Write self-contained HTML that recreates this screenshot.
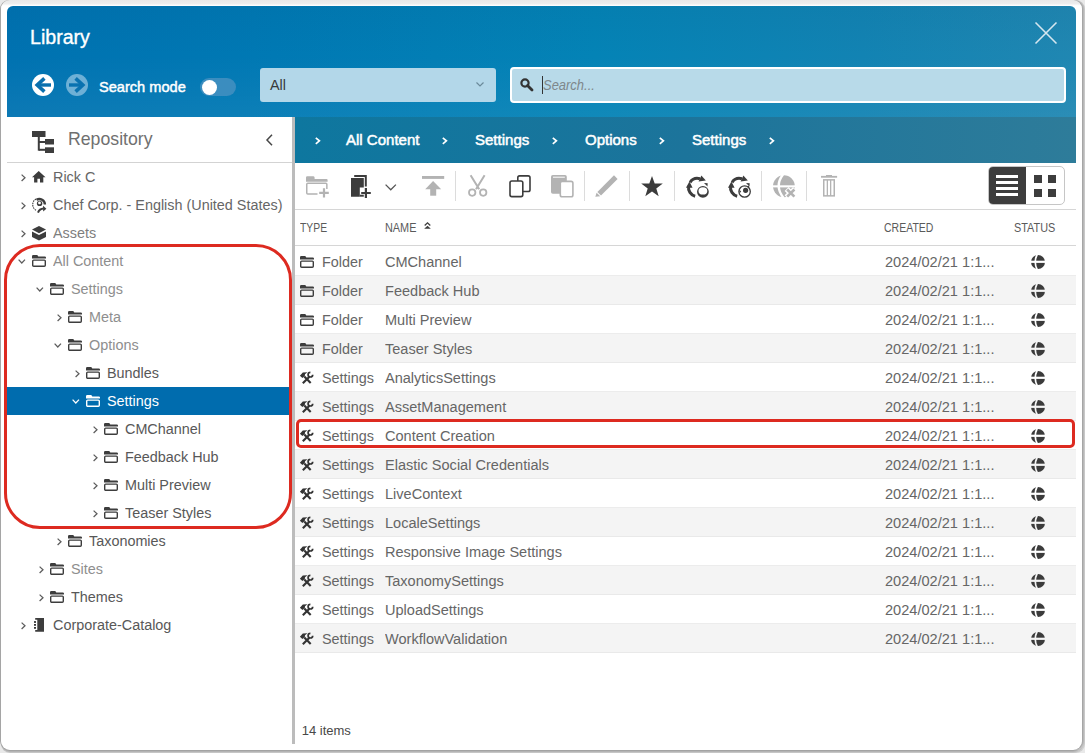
<!DOCTYPE html>
<html><head><meta charset="utf-8">
<style>
*{box-sizing:border-box;margin:0;padding:0}
html,body{width:1085px;height:753px;overflow:hidden}
body{position:relative;background:#e9e9e9;font-family:"Liberation Sans",sans-serif;color:#555}
.a{position:absolute}
.t{position:absolute;white-space:nowrap;line-height:20px}
svg{position:absolute;overflow:visible}
#frame{left:1px;top:0;width:1081px;height:750px;border-radius:9px;background:linear-gradient(#e8e8e8 0,#eeeeee 4px,#fbfbfb 5px,#ffffff 6px);box-shadow:-1px 0 0 #a5a5a5,1px 0 0 #a6a6a6,2px 0 0 #b8b8b8,3px 0 0 #c8c8c8,0 1px 0 #a3a3a3,0 2px 0 #b4b4b4,0 3px 0 #c6c6c6,2px 2px 0 #c0c0c0,3px 3px 0 #d0d0d0}
#hdr{left:7px;top:6px;width:1069px;height:111px;border-radius:6px 6px 0 0;background:linear-gradient(180deg,rgba(0,20,40,0.04) 0%,rgba(0,20,40,0) 45%,rgba(255,255,255,0.05) 100%),linear-gradient(90deg,#0072b1 0%,#0079b4 25%,#0483b6 55%,#1283b3 80%,#2087b2 100%)}
#bc{left:295px;top:117px;width:781px;height:46px;background:linear-gradient(90deg,#0e779f 0%,#1c749b 50%,#2e7c9a 100%)}
#split{left:292px;top:117px;width:3px;height:627px;background:#bcbcbc}
.tree .t{font-size:14.4px;color:#5a5a5a}
.lt{color:#8d8d8d!important}
.dk{color:#505050!important}
.hd{font-size:12.5px;color:#5a5a5a;transform-origin:0 0}
.row{position:absolute;left:295px;width:781px;height:29px;border-bottom:1px solid #e8e8e8}
.row.g{background:#f4f4f4;border-bottom-color:#e9e9e9}
.row .t{font-size:14.4px;color:#5e5e5e;top:5px}
.bct{font-size:13.7px;font-weight:bold;color:#fff}
</style></head>
<body>
<div id="frame" class="a"></div>
<div id="hdr" class="a"></div>

<!-- title -->
<div class="t" style="left:30px;top:25px;font-size:19.6px;color:#fff;line-height:24px;font-weight:normal;-webkit-text-stroke:0.35px #fff">Library</div>

<!-- close X -->
<svg style="left:1035px;top:22px" width="22" height="22"><path d="M0.5 0.5L21.5 21.5M21.5 0.5L0.5 21.5" stroke="#d5e6ef" stroke-width="1.6"/></svg>

<!-- back / forward -->
<svg style="left:32px;top:74px" width="22" height="22"><circle cx="11" cy="11" r="11" fill="#fff"/><path d="M12.4 4.4L5.2 11L12.4 17.6" fill="none" stroke="#0a70ae" stroke-width="3.6"/><path d="M5.5 11H19" stroke="#0a70ae" stroke-width="3.4"/></svg>
<svg style="left:66px;top:74px" width="22" height="22"><circle cx="11" cy="11" r="11" fill="#6eb0d6"/><path d="M9.6 4.4L16.8 11L9.6 17.6" fill="none" stroke="#0a72b0" stroke-width="3.6"/><path d="M3 11H16.5" stroke="#0a72b0" stroke-width="3.4"/></svg>

<div class="t" style="left:99px;top:76.5px;font-size:14.6px;font-weight:normal;color:#fff;-webkit-text-stroke:0.45px #fff">Search mode</div>

<!-- toggle -->
<div class="a" style="left:200px;top:78px;width:36px;height:18px;border-radius:9px;background:#3b8dbf"></div>
<div class="a" style="left:201.5px;top:79.5px;width:15px;height:15px;border-radius:50%;background:#fff"></div>

<!-- combo -->
<div class="a" style="left:260px;top:68px;width:236px;height:34px;border-radius:3px;background:#b3d7e9"></div>
<div class="t" style="left:270px;top:75px;font-size:14.4px;color:#3a3a3a">All</div>
<svg style="left:476px;top:82px" width="8" height="5"><path d="M0.5 0.5L4 4L7.5 0.5" fill="none" stroke="#6a8a9a" stroke-width="1.2"/></svg>

<!-- search -->
<div class="a" style="left:510px;top:67px;width:556px;height:36px;border-radius:4px;background:#b8dae9;border:2px solid #fff"></div>
<svg style="left:520px;top:78px" width="13" height="13"><circle cx="5" cy="5" r="3.6" fill="none" stroke="#333" stroke-width="2.2"/><path d="M7.5 7.5L12 12" stroke="#333" stroke-width="2.8" stroke-linecap="round"/></svg>
<div class="a" style="left:542px;top:76px;width:1px;height:18px;background:#333"></div>
<div class="t" style="left:543px;top:75px;font-size:14.4px;color:#7e878b;font-style:italic;transform:scaleX(0.9);transform-origin:0 0">Search...</div>

<!-- left panel header -->
<div class="a" style="left:7px;top:117px;width:285px;height:627px;background:#fff"></div>
<svg style="left:32px;top:131px" width="22" height="22"><rect x="0" y="0" width="13.5" height="6" fill="#3d3d3d"/><rect x="5.8" y="5" width="2" height="14.7" fill="#3d3d3d"/><rect x="13" y="8" width="9" height="5.5" fill="#3d3d3d"/><rect x="13" y="16.3" width="9" height="5.7" fill="#3d3d3d"/><rect x="7" y="10" width="6.5" height="2" fill="#3d3d3d"/><rect x="7" y="17.8" width="6.5" height="2" fill="#3d3d3d"/></svg>
<div class="t" style="left:68px;top:126.5px;font-size:17.8px;color:#707070;line-height:24px;transform:scaleX(0.995);transform-origin:0 0">Repository</div>
<svg style="left:266px;top:134px" width="7" height="12"><path d="M6 0.7L1 6L6 11.3" fill="none" stroke="#474747" stroke-width="1.5"/></svg>
<div class="a" style="left:7px;top:162px;width:285px;height:1px;background:#d3d3d3"></div>

<div id="split" class="a"></div>
<div id="bc" class="a"></div>



<svg style="left:20.5px;top:173.5px" width="5" height="8"><path d="M0.6 0.6L4 3.8L0.6 7" fill="none" stroke="#5c5c5c" stroke-width="1.25"/></svg>
<svg style="left:32px;top:171.4px" width="14" height="12"><path d="M6.7 0L13.5 6.3H11.3V11.6H8V7.8H5.4V11.6H2.1V6.3H0Z" fill="#3d3d3d"/></svg>
<div class="t" style="left:52.6px;top:166.73px;font-size:15.2px;color:#666666;transform:scaleX(0.947);transform-origin:0 0">Rick C</div>
<svg style="left:20.5px;top:201.5px" width="5" height="8"><path d="M0.6 0.6L4 3.8L0.6 7" fill="none" stroke="#5c5c5c" stroke-width="1.25"/></svg>
<svg style="left:30px;top:195px" width="18" height="19"><path d="M6 15.3A6.6 6.6 0 0 1 6 3.9" fill="none" stroke="#3d3d3d" stroke-width="1.1" stroke-dasharray="1.6 0.8"/><path d="M6.5 4.75A5.6 5.6 0 0 1 14.9 9.6" fill="none" stroke="#3d3d3d" stroke-width="2.4"/><circle cx="9.6" cy="8.4" r="2.7" fill="#3d3d3d"/><circle cx="9.5" cy="7.9" r="1.4" fill="#fff"/><path d="M8 17.6Q9.4 13.6 13.6 13.4" fill="none" stroke="#3d3d3d" stroke-width="2"/><path d="M13 10.8L16.4 13.8L13.2 16.6Z" fill="#3d3d3d"/></svg>
<div class="t" style="left:52.6px;top:194.73px;font-size:15.2px;color:#666666;transform:scaleX(0.947);transform-origin:0 0">Chef Corp. - English (United States)</div>
<svg style="left:20.5px;top:229.5px" width="5" height="8"><path d="M0.6 0.6L4 3.8L0.6 7" fill="none" stroke="#5c5c5c" stroke-width="1.25"/></svg>
<svg style="left:32px;top:225.5px" width="14" height="15"><path d="M7 0L14 3.6L7 7.2L0 3.6Z" fill="#3d3d3d"/><path d="M0 5.4L7 9L14 5.4V11L7 14.6L0 11Z" fill="#3d3d3d"/></svg>
<div class="t" style="left:52.6px;top:222.73px;font-size:15.2px;color:#7e7e7e;transform:scaleX(0.947);transform-origin:0 0">Assets</div>
<svg style="left:18.3px;top:259px" width="8" height="5"><path d="M0.6 0.6L3.8 4L7 0.6" fill="none" stroke="#5c5c5c" stroke-width="1.25"/></svg>
<svg style="left:32px;top:255.3px" width="14" height="12"><path d="M0 1.2Q0 0 1.2 0H5.3L6.3 1.4H12.8Q14 1.4 14 2.6V3.6H0Z" fill="#3d3d3d"/><rect x="0.7" y="5.1" width="12.6" height="6.2" rx="1" fill="none" stroke="#3d3d3d" stroke-width="1.4"/></svg>
<div class="t" style="left:52.6px;top:250.73px;font-size:15.2px;color:#8e8e8e;transform:scaleX(0.947);transform-origin:0 0">All Content</div>
<svg style="left:36.3px;top:287px" width="8" height="5"><path d="M0.6 0.6L3.8 4L7 0.6" fill="none" stroke="#5c5c5c" stroke-width="1.25"/></svg>
<svg style="left:50px;top:283.3px" width="14" height="12"><path d="M0 1.2Q0 0 1.2 0H5.3L6.3 1.4H12.8Q14 1.4 14 2.6V3.6H0Z" fill="#3d3d3d"/><rect x="0.7" y="5.1" width="12.6" height="6.2" rx="1" fill="none" stroke="#3d3d3d" stroke-width="1.4"/></svg>
<div class="t" style="left:70.6px;top:278.73px;font-size:15.2px;color:#8e8e8e;transform:scaleX(0.947);transform-origin:0 0">Settings</div>
<svg style="left:56.5px;top:313.5px" width="5" height="8"><path d="M0.6 0.6L4 3.8L0.6 7" fill="none" stroke="#5c5c5c" stroke-width="1.25"/></svg>
<svg style="left:68px;top:311.3px" width="14" height="12"><path d="M0 1.2Q0 0 1.2 0H5.3L6.3 1.4H12.8Q14 1.4 14 2.6V3.6H0Z" fill="#3d3d3d"/><rect x="0.7" y="5.1" width="12.6" height="6.2" rx="1" fill="none" stroke="#3d3d3d" stroke-width="1.4"/></svg>
<div class="t" style="left:88.6px;top:306.73px;font-size:15.2px;color:#8e8e8e;transform:scaleX(0.947);transform-origin:0 0">Meta</div>
<svg style="left:54.3px;top:343px" width="8" height="5"><path d="M0.6 0.6L3.8 4L7 0.6" fill="none" stroke="#5c5c5c" stroke-width="1.25"/></svg>
<svg style="left:68px;top:339.3px" width="14" height="12"><path d="M0 1.2Q0 0 1.2 0H5.3L6.3 1.4H12.8Q14 1.4 14 2.6V3.6H0Z" fill="#3d3d3d"/><rect x="0.7" y="5.1" width="12.6" height="6.2" rx="1" fill="none" stroke="#3d3d3d" stroke-width="1.4"/></svg>
<div class="t" style="left:88.6px;top:334.73px;font-size:15.2px;color:#8e8e8e;transform:scaleX(0.947);transform-origin:0 0">Options</div>
<svg style="left:74.5px;top:369.5px" width="5" height="8"><path d="M0.6 0.6L4 3.8L0.6 7" fill="none" stroke="#5c5c5c" stroke-width="1.25"/></svg>
<svg style="left:86px;top:367.3px" width="14" height="12"><path d="M0 1.2Q0 0 1.2 0H5.3L6.3 1.4H12.8Q14 1.4 14 2.6V3.6H0Z" fill="#3d3d3d"/><rect x="0.7" y="5.1" width="12.6" height="6.2" rx="1" fill="none" stroke="#3d3d3d" stroke-width="1.4"/></svg>
<div class="t" style="left:106.6px;top:362.73px;font-size:15.2px;color:#585858;transform:scaleX(0.947);transform-origin:0 0">Bundles</div>
<div class="a" style="left:7px;top:387px;width:282px;height:28px;background:#006cae"></div>
<svg style="left:72.3px;top:399px" width="8" height="5"><path d="M0.6 0.6L3.8 4L7 0.6" fill="none" stroke="#ffffff" stroke-width="1.25"/></svg>
<svg style="left:86px;top:395.3px" width="14" height="12"><path d="M0 1.2Q0 0 1.2 0H5.3L6.3 1.4H12.8Q14 1.4 14 2.6V3.6H0Z" fill="#ffffff"/><rect x="0.7" y="5.1" width="12.6" height="6.2" rx="1" fill="none" stroke="#ffffff" stroke-width="1.4"/></svg>
<div class="t" style="left:106.6px;top:390.73px;font-size:15.2px;color:#ffffff;transform:scaleX(0.947);transform-origin:0 0">Settings</div>
<svg style="left:92.5px;top:425.5px" width="5" height="8"><path d="M0.6 0.6L4 3.8L0.6 7" fill="none" stroke="#5c5c5c" stroke-width="1.25"/></svg>
<svg style="left:104px;top:423.3px" width="14" height="12"><path d="M0 1.2Q0 0 1.2 0H5.3L6.3 1.4H12.8Q14 1.4 14 2.6V3.6H0Z" fill="#3d3d3d"/><rect x="0.7" y="5.1" width="12.6" height="6.2" rx="1" fill="none" stroke="#3d3d3d" stroke-width="1.4"/></svg>
<div class="t" style="left:124.6px;top:418.73px;font-size:15.2px;color:#585858;transform:scaleX(0.947);transform-origin:0 0">CMChannel</div>
<svg style="left:92.5px;top:453.5px" width="5" height="8"><path d="M0.6 0.6L4 3.8L0.6 7" fill="none" stroke="#5c5c5c" stroke-width="1.25"/></svg>
<svg style="left:104px;top:451.3px" width="14" height="12"><path d="M0 1.2Q0 0 1.2 0H5.3L6.3 1.4H12.8Q14 1.4 14 2.6V3.6H0Z" fill="#3d3d3d"/><rect x="0.7" y="5.1" width="12.6" height="6.2" rx="1" fill="none" stroke="#3d3d3d" stroke-width="1.4"/></svg>
<div class="t" style="left:124.6px;top:446.73px;font-size:15.2px;color:#585858;transform:scaleX(0.947);transform-origin:0 0">Feedback Hub</div>
<svg style="left:92.5px;top:481.5px" width="5" height="8"><path d="M0.6 0.6L4 3.8L0.6 7" fill="none" stroke="#5c5c5c" stroke-width="1.25"/></svg>
<svg style="left:104px;top:479.3px" width="14" height="12"><path d="M0 1.2Q0 0 1.2 0H5.3L6.3 1.4H12.8Q14 1.4 14 2.6V3.6H0Z" fill="#3d3d3d"/><rect x="0.7" y="5.1" width="12.6" height="6.2" rx="1" fill="none" stroke="#3d3d3d" stroke-width="1.4"/></svg>
<div class="t" style="left:124.6px;top:474.73px;font-size:15.2px;color:#585858;transform:scaleX(0.947);transform-origin:0 0">Multi Preview</div>
<svg style="left:92.5px;top:509.5px" width="5" height="8"><path d="M0.6 0.6L4 3.8L0.6 7" fill="none" stroke="#5c5c5c" stroke-width="1.25"/></svg>
<svg style="left:104px;top:507.3px" width="14" height="12"><path d="M0 1.2Q0 0 1.2 0H5.3L6.3 1.4H12.8Q14 1.4 14 2.6V3.6H0Z" fill="#3d3d3d"/><rect x="0.7" y="5.1" width="12.6" height="6.2" rx="1" fill="none" stroke="#3d3d3d" stroke-width="1.4"/></svg>
<div class="t" style="left:124.6px;top:502.73px;font-size:15.2px;color:#585858;transform:scaleX(0.947);transform-origin:0 0">Teaser Styles</div>
<svg style="left:56.5px;top:537.5px" width="5" height="8"><path d="M0.6 0.6L4 3.8L0.6 7" fill="none" stroke="#5c5c5c" stroke-width="1.25"/></svg>
<svg style="left:68px;top:535.3px" width="14" height="12"><path d="M0 1.2Q0 0 1.2 0H5.3L6.3 1.4H12.8Q14 1.4 14 2.6V3.6H0Z" fill="#3d3d3d"/><rect x="0.7" y="5.1" width="12.6" height="6.2" rx="1" fill="none" stroke="#3d3d3d" stroke-width="1.4"/></svg>
<div class="t" style="left:88.6px;top:530.73px;font-size:15.2px;color:#585858;transform:scaleX(0.947);transform-origin:0 0">Taxonomies</div>
<svg style="left:38.5px;top:565.5px" width="5" height="8"><path d="M0.6 0.6L4 3.8L0.6 7" fill="none" stroke="#5c5c5c" stroke-width="1.25"/></svg>
<svg style="left:50px;top:563.3px" width="14" height="12"><path d="M0 1.2Q0 0 1.2 0H5.3L6.3 1.4H12.8Q14 1.4 14 2.6V3.6H0Z" fill="#3d3d3d"/><rect x="0.7" y="5.1" width="12.6" height="6.2" rx="1" fill="none" stroke="#3d3d3d" stroke-width="1.4"/></svg>
<div class="t" style="left:70.6px;top:558.73px;font-size:15.2px;color:#8e8e8e;transform:scaleX(0.947);transform-origin:0 0">Sites</div>
<svg style="left:38.5px;top:593.5px" width="5" height="8"><path d="M0.6 0.6L4 3.8L0.6 7" fill="none" stroke="#5c5c5c" stroke-width="1.25"/></svg>
<svg style="left:50px;top:591.3px" width="14" height="12"><path d="M0 1.2Q0 0 1.2 0H5.3L6.3 1.4H12.8Q14 1.4 14 2.6V3.6H0Z" fill="#3d3d3d"/><rect x="0.7" y="5.1" width="12.6" height="6.2" rx="1" fill="none" stroke="#3d3d3d" stroke-width="1.4"/></svg>
<div class="t" style="left:70.6px;top:586.73px;font-size:15.2px;color:#585858;transform:scaleX(0.947);transform-origin:0 0">Themes</div>
<svg style="left:20.5px;top:621.5px" width="5" height="8"><path d="M0.6 0.6L4 3.8L0.6 7" fill="none" stroke="#5c5c5c" stroke-width="1.25"/></svg>
<svg style="left:33.9px;top:618px" width="10" height="14"><path d="M1.2 0H10V13.7H1.2V11.9H3.3V1.8H1.2Z" fill="#3d3d3d"/><rect x="0" y="3.2" width="2" height="1.6" fill="#222"/><rect x="0" y="6.1" width="2" height="1.6" fill="#222"/><rect x="0" y="9.1" width="2" height="1.6" fill="#222"/></svg>
<div class="t" style="left:52.6px;top:614.73px;font-size:15.2px;color:#585858;transform:scaleX(0.947);transform-origin:0 0">Corporate-Catalog</div>
<div class="a" style="left:4px;top:244px;width:288px;height:285px;border:3px solid #dd2a20;border-radius:36px"></div>
<svg style="left:315.2px;top:136.5px" width="6" height="8"><path d="M0.8 0.8L4.4 3.8L0.8 6.8" fill="none" stroke="#fff" stroke-width="1.7"/></svg>
<svg style="left:441.8px;top:136.5px" width="6" height="8"><path d="M0.8 0.8L4.4 3.8L0.8 6.8" fill="none" stroke="#fff" stroke-width="1.7"/></svg>
<svg style="left:552.2px;top:136.5px" width="6" height="8"><path d="M0.8 0.8L4.4 3.8L0.8 6.8" fill="none" stroke="#fff" stroke-width="1.7"/></svg>
<svg style="left:659.4px;top:136.5px" width="6" height="8"><path d="M0.8 0.8L4.4 3.8L0.8 6.8" fill="none" stroke="#fff" stroke-width="1.7"/></svg>
<svg style="left:769.2px;top:136.5px" width="6" height="8"><path d="M0.8 0.8L4.4 3.8L0.8 6.8" fill="none" stroke="#fff" stroke-width="1.7"/></svg>
<div class="t" style="left:346px;top:129.5px;font-size:14.5px;font-weight:normal;color:#fff;-webkit-text-stroke:0.5px #fff;transform:scaleX(1.035);transform-origin:0 0">All Content</div>
<div class="t" style="left:475.2px;top:129.5px;font-size:14.5px;font-weight:normal;color:#fff;-webkit-text-stroke:0.5px #fff;transform:scaleX(1.035);transform-origin:0 0">Settings</div>
<div class="t" style="left:585px;top:129.5px;font-size:14.5px;font-weight:normal;color:#fff;-webkit-text-stroke:0.5px #fff;transform:scaleX(1.035);transform-origin:0 0">Options</div>
<div class="t" style="left:692.3px;top:129.5px;font-size:14.5px;font-weight:normal;color:#fff;-webkit-text-stroke:0.5px #fff;transform:scaleX(1.035);transform-origin:0 0">Settings</div>
<!-- new folder -->
<svg style="left:306px;top:176px" width="23" height="22"><path d="M0 1.5Q0 0.3 1.2 0.3H7.2Q8.4 0.3 8.6 1.6V3.1H20.6Q21.6 3.1 21.6 4.1V5.8H0Z" fill="#b3b3b3"/><path d="M11.5 18H1.8Q0.75 18 0.75 17V8.3Q0.75 7.3 1.8 7.3H19.8Q20.85 7.3 20.85 8.3V13" fill="none" stroke="#b3b3b3" stroke-width="1.5"/><path d="M18 12.2V21.6M13.2 16.9H22.8" stroke="#b3b3b3" stroke-width="2.2"/></svg>
<!-- new content -->
<svg style="left:351px;top:175px" width="22" height="23"><path d="M0 3.1H12.8V12.5H8.8V21.7H0Z" fill="#3c3c3c"/><path d="M8.8 20.7H12.8" stroke="#3c3c3c" stroke-width="2"/><path d="M3.2 1H14.8V11.6" fill="none" stroke="#3c3c3c" stroke-width="2"/><path d="M14.9 13V23M10.2 18H19.8" stroke="#3c3c3c" stroke-width="2.2"/></svg>
<svg style="left:385.3px;top:183.6px" width="12" height="7"><path d="M0.6 0.6L5.75 5.8L10.9 0.6" fill="none" stroke="#555" stroke-width="1.3"/></svg>
<!-- publish -->
<svg style="left:421.8px;top:176px" width="23" height="20"><rect x="0" y="0" width="22.2" height="2.9" fill="#b3b3b3"/><path d="M3.2 13.3L11.1 5L19.2 13.3Z" fill="#b3b3b3"/><rect x="8.2" y="13" width="6" height="6.7" fill="#b3b3b3"/></svg>
<!-- separators -->
<div class="a" style="left:455px;top:171px;width:1px;height:30px;background:#dcdcdc"></div>
<div class="a" style="left:584px;top:171px;width:1px;height:30px;background:#dcdcdc"></div>
<div class="a" style="left:629px;top:171px;width:1px;height:30px;background:#dcdcdc"></div>
<div class="a" style="left:674px;top:171px;width:1px;height:30px;background:#dcdcdc"></div>
<div class="a" style="left:761px;top:171px;width:1px;height:30px;background:#dcdcdc"></div>
<div class="a" style="left:806px;top:171px;width:1px;height:30px;background:#dcdcdc"></div>
<!-- scissors -->
<svg style="left:468px;top:175px" width="20" height="22"><path d="M2.6 0.3L11.2 14.2M16.6 0.3L8 14.2" stroke="#b3b3b3" stroke-width="2"/><circle cx="4.2" cy="17.6" r="3.2" fill="none" stroke="#b3b3b3" stroke-width="1.8"/><circle cx="15.2" cy="17.6" r="3.2" fill="none" stroke="#b3b3b3" stroke-width="1.8"/></svg>
<!-- copy -->
<svg style="left:509px;top:175px" width="22" height="22"><rect x="8.8" y="0.9" width="12.2" height="15.6" rx="1.8" fill="#fff" stroke="#3c3c3c" stroke-width="1.6"/><rect x="1" y="6" width="12.8" height="15.6" rx="1.8" fill="#fff" stroke="#3c3c3c" stroke-width="1.6"/></svg>
<!-- paste -->
<svg style="left:551px;top:175px" width="22" height="22"><rect x="0" y="0" width="15.8" height="18.7" rx="1.8" fill="#b3b3b3"/><path d="M2 2.2H13.8" stroke="#fff" stroke-width="1"/><rect x="9.3" y="6.4" width="12.6" height="15.4" rx="1.8" fill="#fff" stroke="#b3b3b3" stroke-width="1.6"/></svg>
<!-- pencil -->
<svg style="left:595px;top:175px" width="23" height="22"><path d="M19 0.3L22.6 3.9L6 20.5L2.4 16.9Z" fill="#b3b3b3"/><path d="M1.6 17.7L5.2 21.3L0.3 21.8Z" fill="#b3b3b3"/></svg>
<!-- star -->
<svg style="left:641px;top:176px" width="22" height="21"><path d="M11 0L13.7 7.5H21.8L15.3 12.4L17.7 20.3L11 15.4L4.3 20.3L6.7 12.4L0.2 7.5H8.3Z" fill="#3c3c3c"/></svg>
<!-- sync 1 -->
<svg style="left:684px;top:173px" width="26" height="26"><path d="M6.1 9.3A9 9 0 0 1 16 5.8" fill="none" stroke="#3c3c3c" stroke-width="3"/><path d="M17.4 2.4L21.8 7.6L14.6 8.6Z" fill="#3c3c3c"/><path d="M4.64 12.94A9 9 0 0 0 11.17 23.19" fill="none" stroke="#3c3c3c" stroke-width="3"/><path d="M5.4 8.6L2 14.8L8.6 14.8Z" fill="#3c3c3c"/><path d="M20 10L23.7 10.2L23.5 13.4Z" fill="#3c3c3c"/><circle cx="18.9" cy="18.8" r="5.9" fill="#3c3c3c"/><ellipse cx="18.9" cy="17.9" rx="4.4" ry="3.7" fill="#fff"/></svg>
<!-- sync 2 -->
<svg style="left:726px;top:173px" width="26" height="26"><path d="M6.1 9.3A9 9 0 0 1 16 5.8" fill="none" stroke="#3c3c3c" stroke-width="3"/><path d="M17.4 2.4L21.8 7.6L14.6 8.6Z" fill="#3c3c3c"/><path d="M4.64 12.94A9 9 0 0 0 11.17 23.19" fill="none" stroke="#3c3c3c" stroke-width="3"/><path d="M5.4 8.6L2 14.8L8.6 14.8Z" fill="#3c3c3c"/><path d="M20 10L23.7 10.2L23.5 13.4Z" fill="#3c3c3c"/><circle cx="18.6" cy="18.5" r="5.7" fill="#fff" stroke="#3c3c3c" stroke-width="1.3"/><circle cx="19.6" cy="17.3" r="2.6" fill="#3c3c3c"/><path d="M13.4 16.8L15.2 18.6L13.6 20.2Z" fill="#3c3c3c"/><path d="M21 13.6L23 12.6L23.2 15Z" fill="#3c3c3c"/></svg>
<!-- globe x -->
<svg style="left:773px;top:174.5px" width="23" height="24"><circle cx="10.9" cy="11.25" r="10.9" fill="#b3b3b3"/><rect x="-1" y="10.3" width="25" height="2.1" fill="#fff"/><path d="M10 -0.5Q1 11.25 10.7 23" fill="none" stroke="#fff" stroke-width="2.4"/><path d="M13.6 13.9L22 22.3M22 13.9L13.6 22.3" stroke="#fff" stroke-width="5.6"/><path d="M14.2 14.5L21.4 21.7M21.4 14.5L14.2 21.7" stroke="#b3b3b3" stroke-width="2.6"/></svg>
<!-- trash -->
<svg style="left:821px;top:175px" width="17" height="22"><rect x="5" y="0" width="6" height="1.5" fill="#b3b3b3"/><rect x="0" y="0.9" width="16.1" height="1.8" fill="#b3b3b3"/><rect x="2" y="4.1" width="12" height="17.5" fill="#b3b3b3"/><rect x="3.5" y="5.6" width="2.2" height="14.5" fill="#fff"/><rect x="7" y="5.6" width="2" height="14.5" fill="#fff"/><rect x="10.3" y="5.6" width="2.2" height="14.5" fill="#fff"/></svg>
<!-- view toggle -->
<div class="a" style="left:988px;top:166px;width:77px;height:39px;border:1px solid #c6c6c6;border-radius:5px;background:#fff;overflow:hidden"><div class="a" style="left:0;top:0;width:37px;height:39px;background:#3d3d3d"></div></div>
<svg style="left:996px;top:175px" width="22" height="22"><rect x="0" y="0" width="22" height="3" fill="#fff"/><rect x="0" y="6" width="22" height="3" fill="#fff"/><rect x="0" y="12" width="22" height="3" fill="#fff"/><rect x="0" y="18" width="22" height="3" fill="#fff"/></svg>
<svg style="left:1034px;top:175px" width="22" height="22"><rect x="0" y="0" width="8" height="8" fill="#3d3d3d"/><rect x="14" y="0" width="8" height="8" fill="#3d3d3d"/><rect x="0" y="14" width="8" height="8" fill="#3d3d3d"/><rect x="14" y="14" width="8" height="8" fill="#3d3d3d"/></svg>

<div class="a" style="left:295px;top:209px;width:781px;height:1px;background:#d6d6d6"></div>
<div class="a" style="left:295px;top:245px;width:781px;height:1px;background:#d6d6d6"></div>
<div class="t hd" style="left:299.5px;top:218px;transform:scaleX(0.83)">TYPE</div>
<div class="t hd" style="left:384.7px;top:218px;transform:scaleX(0.87)">NAME</div>
<div class="t hd" style="left:884.2px;top:218px;transform:scaleX(0.84)">CREATED</div>
<div class="t hd" style="left:1013.6px;top:218px;transform:scaleX(0.87)">STATUS</div>
<svg style="left:424px;top:222.4px" width="7" height="7"><path d="M0.7 3.4L3.5 0.8L6.3 3.4" fill="none" stroke="#3d3d3d" stroke-width="1.3"/><path d="M0.2 6.8L3.5 3.8L6.8 6.8Z" fill="#3d3d3d"/></svg>
<div class="a" style="left:295px;top:247px;width:781px;height:29px;background:#ffffff;border-bottom:1px solid #ececec"></div>
<svg style="left:300px;top:256.4px" width="14" height="12"><path d="M0 1.2Q0 0 1.2 0H5.3L6.3 1.4H12.8Q14 1.4 14 2.6V3.6H0Z" fill="#3d3d3d"/><rect x="0.7" y="5.1" width="12.6" height="6.2" rx="1" fill="none" stroke="#3d3d3d" stroke-width="1.4"/></svg>
<div class="t" style="left:321.7px;top:251.8px;font-size:15.2px;color:#666;transform:scaleX(0.947);transform-origin:0 0">Folder</div>
<div class="t" style="left:384.7px;top:251.8px;font-size:15.2px;color:#666;transform:scaleX(0.957);transform-origin:0 0">CMChannel</div>
<div class="t" style="left:884.6px;top:251.8px;font-size:15.2px;color:#666;transform:scaleX(0.96);transform-origin:0 0">2024/02/21 1:1...</div>
<svg style="left:1031px;top:255px" width="14" height="14"><circle cx="7" cy="7" r="7" fill="#3b3b3b"/><rect x="-1" y="5.7" width="16" height="2.2" fill="#ffffff"/><path d="M6.1 -0.5Q2.4 7 6.1 14.5" fill="none" stroke="#ffffff" stroke-width="1.7"/></svg>
<div class="a" style="left:295px;top:276px;width:781px;height:29px;background:#f4f4f4;border-bottom:1px solid #e9e9e9"></div>
<svg style="left:300px;top:285.4px" width="14" height="12"><path d="M0 1.2Q0 0 1.2 0H5.3L6.3 1.4H12.8Q14 1.4 14 2.6V3.6H0Z" fill="#3d3d3d"/><rect x="0.7" y="5.1" width="12.6" height="6.2" rx="1" fill="none" stroke="#3d3d3d" stroke-width="1.4"/></svg>
<div class="t" style="left:321.7px;top:280.8px;font-size:15.2px;color:#666;transform:scaleX(0.947);transform-origin:0 0">Folder</div>
<div class="t" style="left:384.7px;top:280.8px;font-size:15.2px;color:#666;transform:scaleX(0.957);transform-origin:0 0">Feedback Hub</div>
<div class="t" style="left:884.6px;top:280.8px;font-size:15.2px;color:#666;transform:scaleX(0.96);transform-origin:0 0">2024/02/21 1:1...</div>
<svg style="left:1031px;top:284px" width="14" height="14"><circle cx="7" cy="7" r="7" fill="#3b3b3b"/><rect x="-1" y="5.7" width="16" height="2.2" fill="#f4f4f4"/><path d="M6.1 -0.5Q2.4 7 6.1 14.5" fill="none" stroke="#f4f4f4" stroke-width="1.7"/></svg>
<div class="a" style="left:295px;top:305px;width:781px;height:29px;background:#ffffff;border-bottom:1px solid #ececec"></div>
<svg style="left:300px;top:314.4px" width="14" height="12"><path d="M0 1.2Q0 0 1.2 0H5.3L6.3 1.4H12.8Q14 1.4 14 2.6V3.6H0Z" fill="#3d3d3d"/><rect x="0.7" y="5.1" width="12.6" height="6.2" rx="1" fill="none" stroke="#3d3d3d" stroke-width="1.4"/></svg>
<div class="t" style="left:321.7px;top:309.8px;font-size:15.2px;color:#666;transform:scaleX(0.947);transform-origin:0 0">Folder</div>
<div class="t" style="left:384.7px;top:309.8px;font-size:15.2px;color:#666;transform:scaleX(0.957);transform-origin:0 0">Multi Preview</div>
<div class="t" style="left:884.6px;top:309.8px;font-size:15.2px;color:#666;transform:scaleX(0.96);transform-origin:0 0">2024/02/21 1:1...</div>
<svg style="left:1031px;top:313px" width="14" height="14"><circle cx="7" cy="7" r="7" fill="#3b3b3b"/><rect x="-1" y="5.7" width="16" height="2.2" fill="#ffffff"/><path d="M6.1 -0.5Q2.4 7 6.1 14.5" fill="none" stroke="#ffffff" stroke-width="1.7"/></svg>
<div class="a" style="left:295px;top:334px;width:781px;height:29px;background:#f4f4f4;border-bottom:1px solid #e9e9e9"></div>
<svg style="left:300px;top:343.4px" width="14" height="12"><path d="M0 1.2Q0 0 1.2 0H5.3L6.3 1.4H12.8Q14 1.4 14 2.6V3.6H0Z" fill="#3d3d3d"/><rect x="0.7" y="5.1" width="12.6" height="6.2" rx="1" fill="none" stroke="#3d3d3d" stroke-width="1.4"/></svg>
<div class="t" style="left:321.7px;top:338.8px;font-size:15.2px;color:#666;transform:scaleX(0.947);transform-origin:0 0">Folder</div>
<div class="t" style="left:384.7px;top:338.8px;font-size:15.2px;color:#666;transform:scaleX(0.957);transform-origin:0 0">Teaser Styles</div>
<div class="t" style="left:884.6px;top:338.8px;font-size:15.2px;color:#666;transform:scaleX(0.96);transform-origin:0 0">2024/02/21 1:1...</div>
<svg style="left:1031px;top:342px" width="14" height="14"><circle cx="7" cy="7" r="7" fill="#3b3b3b"/><rect x="-1" y="5.7" width="16" height="2.2" fill="#f4f4f4"/><path d="M6.1 -0.5Q2.4 7 6.1 14.5" fill="none" stroke="#f4f4f4" stroke-width="1.7"/></svg>
<div class="a" style="left:295px;top:363px;width:781px;height:29px;background:#ffffff;border-bottom:1px solid #ececec"></div>
<svg style="left:300.2px;top:371.7px" width="14" height="12"><g transform="translate(-2.2,-2.7)"><path d="M2.1 6.5L5 3.2L9.6 2.9L7.2 5L7 6.6L4.6 8.8Z" fill="#333"/><path d="M6.5 7.2L12.9 13.8" stroke="#333" stroke-width="2.1"/><path d="M5 13.9L11.6 7.4" stroke="#333" stroke-width="2.1"/><path d="M12.6 3.1A2.3 2.3 0 1 0 14.9 5.4" fill="none" stroke="#333" stroke-width="1.7"/></g></svg>
<div class="t" style="left:321.7px;top:367.8px;font-size:15.2px;color:#666;transform:scaleX(0.947);transform-origin:0 0">Settings</div>
<div class="t" style="left:384.7px;top:367.8px;font-size:15.2px;color:#666;transform:scaleX(0.957);transform-origin:0 0">AnalyticsSettings</div>
<div class="t" style="left:884.6px;top:367.8px;font-size:15.2px;color:#666;transform:scaleX(0.96);transform-origin:0 0">2024/02/21 1:1...</div>
<svg style="left:1031px;top:371px" width="14" height="14"><circle cx="7" cy="7" r="7" fill="#3b3b3b"/><rect x="-1" y="5.7" width="16" height="2.2" fill="#ffffff"/><path d="M6.1 -0.5Q2.4 7 6.1 14.5" fill="none" stroke="#ffffff" stroke-width="1.7"/></svg>
<div class="a" style="left:295px;top:392px;width:781px;height:29px;background:#f4f4f4;border-bottom:1px solid #e9e9e9"></div>
<svg style="left:300.2px;top:400.7px" width="14" height="12"><g transform="translate(-2.2,-2.7)"><path d="M2.1 6.5L5 3.2L9.6 2.9L7.2 5L7 6.6L4.6 8.8Z" fill="#333"/><path d="M6.5 7.2L12.9 13.8" stroke="#333" stroke-width="2.1"/><path d="M5 13.9L11.6 7.4" stroke="#333" stroke-width="2.1"/><path d="M12.6 3.1A2.3 2.3 0 1 0 14.9 5.4" fill="none" stroke="#333" stroke-width="1.7"/></g></svg>
<div class="t" style="left:321.7px;top:396.8px;font-size:15.2px;color:#666;transform:scaleX(0.947);transform-origin:0 0">Settings</div>
<div class="t" style="left:384.7px;top:396.8px;font-size:15.2px;color:#666;transform:scaleX(0.957);transform-origin:0 0">AssetManagement</div>
<div class="t" style="left:884.6px;top:396.8px;font-size:15.2px;color:#666;transform:scaleX(0.96);transform-origin:0 0">2024/02/21 1:1...</div>
<svg style="left:1031px;top:400px" width="14" height="14"><circle cx="7" cy="7" r="7" fill="#3b3b3b"/><rect x="-1" y="5.7" width="16" height="2.2" fill="#f4f4f4"/><path d="M6.1 -0.5Q2.4 7 6.1 14.5" fill="none" stroke="#f4f4f4" stroke-width="1.7"/></svg>
<div class="a" style="left:295px;top:421px;width:781px;height:29px;background:#ffffff;border-bottom:1px solid #ececec"></div>
<svg style="left:300.2px;top:429.7px" width="14" height="12"><g transform="translate(-2.2,-2.7)"><path d="M2.1 6.5L5 3.2L9.6 2.9L7.2 5L7 6.6L4.6 8.8Z" fill="#333"/><path d="M6.5 7.2L12.9 13.8" stroke="#333" stroke-width="2.1"/><path d="M5 13.9L11.6 7.4" stroke="#333" stroke-width="2.1"/><path d="M12.6 3.1A2.3 2.3 0 1 0 14.9 5.4" fill="none" stroke="#333" stroke-width="1.7"/></g></svg>
<div class="t" style="left:321.7px;top:425.8px;font-size:15.2px;color:#666;transform:scaleX(0.947);transform-origin:0 0">Settings</div>
<div class="t" style="left:384.7px;top:425.8px;font-size:15.2px;color:#666;transform:scaleX(0.957);transform-origin:0 0">Content Creation</div>
<div class="t" style="left:884.6px;top:425.8px;font-size:15.2px;color:#666;transform:scaleX(0.96);transform-origin:0 0">2024/02/21 1:1...</div>
<svg style="left:1031px;top:429px" width="14" height="14"><circle cx="7" cy="7" r="7" fill="#3b3b3b"/><rect x="-1" y="5.7" width="16" height="2.2" fill="#ffffff"/><path d="M6.1 -0.5Q2.4 7 6.1 14.5" fill="none" stroke="#ffffff" stroke-width="1.7"/></svg>
<div class="a" style="left:295px;top:450px;width:781px;height:29px;background:#f4f4f4;border-bottom:1px solid #e9e9e9"></div>
<svg style="left:300.2px;top:458.7px" width="14" height="12"><g transform="translate(-2.2,-2.7)"><path d="M2.1 6.5L5 3.2L9.6 2.9L7.2 5L7 6.6L4.6 8.8Z" fill="#333"/><path d="M6.5 7.2L12.9 13.8" stroke="#333" stroke-width="2.1"/><path d="M5 13.9L11.6 7.4" stroke="#333" stroke-width="2.1"/><path d="M12.6 3.1A2.3 2.3 0 1 0 14.9 5.4" fill="none" stroke="#333" stroke-width="1.7"/></g></svg>
<div class="t" style="left:321.7px;top:454.8px;font-size:15.2px;color:#666;transform:scaleX(0.947);transform-origin:0 0">Settings</div>
<div class="t" style="left:384.7px;top:454.8px;font-size:15.2px;color:#666;transform:scaleX(0.957);transform-origin:0 0">Elastic Social Credentials</div>
<div class="t" style="left:884.6px;top:454.8px;font-size:15.2px;color:#666;transform:scaleX(0.96);transform-origin:0 0">2024/02/21 1:1...</div>
<svg style="left:1031px;top:458px" width="14" height="14"><circle cx="7" cy="7" r="7" fill="#3b3b3b"/><rect x="-1" y="5.7" width="16" height="2.2" fill="#f4f4f4"/><path d="M6.1 -0.5Q2.4 7 6.1 14.5" fill="none" stroke="#f4f4f4" stroke-width="1.7"/></svg>
<div class="a" style="left:295px;top:479px;width:781px;height:29px;background:#ffffff;border-bottom:1px solid #ececec"></div>
<svg style="left:300.2px;top:487.7px" width="14" height="12"><g transform="translate(-2.2,-2.7)"><path d="M2.1 6.5L5 3.2L9.6 2.9L7.2 5L7 6.6L4.6 8.8Z" fill="#333"/><path d="M6.5 7.2L12.9 13.8" stroke="#333" stroke-width="2.1"/><path d="M5 13.9L11.6 7.4" stroke="#333" stroke-width="2.1"/><path d="M12.6 3.1A2.3 2.3 0 1 0 14.9 5.4" fill="none" stroke="#333" stroke-width="1.7"/></g></svg>
<div class="t" style="left:321.7px;top:483.8px;font-size:15.2px;color:#666;transform:scaleX(0.947);transform-origin:0 0">Settings</div>
<div class="t" style="left:384.7px;top:483.8px;font-size:15.2px;color:#666;transform:scaleX(0.957);transform-origin:0 0">LiveContext</div>
<div class="t" style="left:884.6px;top:483.8px;font-size:15.2px;color:#666;transform:scaleX(0.96);transform-origin:0 0">2024/02/21 1:1...</div>
<svg style="left:1031px;top:487px" width="14" height="14"><circle cx="7" cy="7" r="7" fill="#3b3b3b"/><rect x="-1" y="5.7" width="16" height="2.2" fill="#ffffff"/><path d="M6.1 -0.5Q2.4 7 6.1 14.5" fill="none" stroke="#ffffff" stroke-width="1.7"/></svg>
<div class="a" style="left:295px;top:508px;width:781px;height:29px;background:#f4f4f4;border-bottom:1px solid #e9e9e9"></div>
<svg style="left:300.2px;top:516.7px" width="14" height="12"><g transform="translate(-2.2,-2.7)"><path d="M2.1 6.5L5 3.2L9.6 2.9L7.2 5L7 6.6L4.6 8.8Z" fill="#333"/><path d="M6.5 7.2L12.9 13.8" stroke="#333" stroke-width="2.1"/><path d="M5 13.9L11.6 7.4" stroke="#333" stroke-width="2.1"/><path d="M12.6 3.1A2.3 2.3 0 1 0 14.9 5.4" fill="none" stroke="#333" stroke-width="1.7"/></g></svg>
<div class="t" style="left:321.7px;top:512.8px;font-size:15.2px;color:#666;transform:scaleX(0.947);transform-origin:0 0">Settings</div>
<div class="t" style="left:384.7px;top:512.8px;font-size:15.2px;color:#666;transform:scaleX(0.957);transform-origin:0 0">LocaleSettings</div>
<div class="t" style="left:884.6px;top:512.8px;font-size:15.2px;color:#666;transform:scaleX(0.96);transform-origin:0 0">2024/02/21 1:1...</div>
<svg style="left:1031px;top:516px" width="14" height="14"><circle cx="7" cy="7" r="7" fill="#3b3b3b"/><rect x="-1" y="5.7" width="16" height="2.2" fill="#f4f4f4"/><path d="M6.1 -0.5Q2.4 7 6.1 14.5" fill="none" stroke="#f4f4f4" stroke-width="1.7"/></svg>
<div class="a" style="left:295px;top:537px;width:781px;height:29px;background:#ffffff;border-bottom:1px solid #ececec"></div>
<svg style="left:300.2px;top:545.7px" width="14" height="12"><g transform="translate(-2.2,-2.7)"><path d="M2.1 6.5L5 3.2L9.6 2.9L7.2 5L7 6.6L4.6 8.8Z" fill="#333"/><path d="M6.5 7.2L12.9 13.8" stroke="#333" stroke-width="2.1"/><path d="M5 13.9L11.6 7.4" stroke="#333" stroke-width="2.1"/><path d="M12.6 3.1A2.3 2.3 0 1 0 14.9 5.4" fill="none" stroke="#333" stroke-width="1.7"/></g></svg>
<div class="t" style="left:321.7px;top:541.8px;font-size:15.2px;color:#666;transform:scaleX(0.947);transform-origin:0 0">Settings</div>
<div class="t" style="left:384.7px;top:541.8px;font-size:15.2px;color:#666;transform:scaleX(0.957);transform-origin:0 0">Responsive Image Settings</div>
<div class="t" style="left:884.6px;top:541.8px;font-size:15.2px;color:#666;transform:scaleX(0.96);transform-origin:0 0">2024/02/21 1:1...</div>
<svg style="left:1031px;top:545px" width="14" height="14"><circle cx="7" cy="7" r="7" fill="#3b3b3b"/><rect x="-1" y="5.7" width="16" height="2.2" fill="#ffffff"/><path d="M6.1 -0.5Q2.4 7 6.1 14.5" fill="none" stroke="#ffffff" stroke-width="1.7"/></svg>
<div class="a" style="left:295px;top:566px;width:781px;height:29px;background:#f4f4f4;border-bottom:1px solid #e9e9e9"></div>
<svg style="left:300.2px;top:574.7px" width="14" height="12"><g transform="translate(-2.2,-2.7)"><path d="M2.1 6.5L5 3.2L9.6 2.9L7.2 5L7 6.6L4.6 8.8Z" fill="#333"/><path d="M6.5 7.2L12.9 13.8" stroke="#333" stroke-width="2.1"/><path d="M5 13.9L11.6 7.4" stroke="#333" stroke-width="2.1"/><path d="M12.6 3.1A2.3 2.3 0 1 0 14.9 5.4" fill="none" stroke="#333" stroke-width="1.7"/></g></svg>
<div class="t" style="left:321.7px;top:570.8px;font-size:15.2px;color:#666;transform:scaleX(0.947);transform-origin:0 0">Settings</div>
<div class="t" style="left:384.7px;top:570.8px;font-size:15.2px;color:#666;transform:scaleX(0.957);transform-origin:0 0">TaxonomySettings</div>
<div class="t" style="left:884.6px;top:570.8px;font-size:15.2px;color:#666;transform:scaleX(0.96);transform-origin:0 0">2024/02/21 1:1...</div>
<svg style="left:1031px;top:574px" width="14" height="14"><circle cx="7" cy="7" r="7" fill="#3b3b3b"/><rect x="-1" y="5.7" width="16" height="2.2" fill="#f4f4f4"/><path d="M6.1 -0.5Q2.4 7 6.1 14.5" fill="none" stroke="#f4f4f4" stroke-width="1.7"/></svg>
<div class="a" style="left:295px;top:595px;width:781px;height:29px;background:#ffffff;border-bottom:1px solid #ececec"></div>
<svg style="left:300.2px;top:603.7px" width="14" height="12"><g transform="translate(-2.2,-2.7)"><path d="M2.1 6.5L5 3.2L9.6 2.9L7.2 5L7 6.6L4.6 8.8Z" fill="#333"/><path d="M6.5 7.2L12.9 13.8" stroke="#333" stroke-width="2.1"/><path d="M5 13.9L11.6 7.4" stroke="#333" stroke-width="2.1"/><path d="M12.6 3.1A2.3 2.3 0 1 0 14.9 5.4" fill="none" stroke="#333" stroke-width="1.7"/></g></svg>
<div class="t" style="left:321.7px;top:599.8px;font-size:15.2px;color:#666;transform:scaleX(0.947);transform-origin:0 0">Settings</div>
<div class="t" style="left:384.7px;top:599.8px;font-size:15.2px;color:#666;transform:scaleX(0.957);transform-origin:0 0">UploadSettings</div>
<div class="t" style="left:884.6px;top:599.8px;font-size:15.2px;color:#666;transform:scaleX(0.96);transform-origin:0 0">2024/02/21 1:1...</div>
<svg style="left:1031px;top:603px" width="14" height="14"><circle cx="7" cy="7" r="7" fill="#3b3b3b"/><rect x="-1" y="5.7" width="16" height="2.2" fill="#ffffff"/><path d="M6.1 -0.5Q2.4 7 6.1 14.5" fill="none" stroke="#ffffff" stroke-width="1.7"/></svg>
<div class="a" style="left:295px;top:624px;width:781px;height:29px;background:#f4f4f4;border-bottom:1px solid #e9e9e9"></div>
<svg style="left:300.2px;top:632.7px" width="14" height="12"><g transform="translate(-2.2,-2.7)"><path d="M2.1 6.5L5 3.2L9.6 2.9L7.2 5L7 6.6L4.6 8.8Z" fill="#333"/><path d="M6.5 7.2L12.9 13.8" stroke="#333" stroke-width="2.1"/><path d="M5 13.9L11.6 7.4" stroke="#333" stroke-width="2.1"/><path d="M12.6 3.1A2.3 2.3 0 1 0 14.9 5.4" fill="none" stroke="#333" stroke-width="1.7"/></g></svg>
<div class="t" style="left:321.7px;top:628.8px;font-size:15.2px;color:#666;transform:scaleX(0.947);transform-origin:0 0">Settings</div>
<div class="t" style="left:384.7px;top:628.8px;font-size:15.2px;color:#666;transform:scaleX(0.957);transform-origin:0 0">WorkflowValidation</div>
<div class="t" style="left:884.6px;top:628.8px;font-size:15.2px;color:#666;transform:scaleX(0.96);transform-origin:0 0">2024/02/21 1:1...</div>
<svg style="left:1031px;top:632px" width="14" height="14"><circle cx="7" cy="7" r="7" fill="#3b3b3b"/><rect x="-1" y="5.7" width="16" height="2.2" fill="#f4f4f4"/><path d="M6.1 -0.5Q2.4 7 6.1 14.5" fill="none" stroke="#f4f4f4" stroke-width="1.7"/></svg>
<div class="a" style="left:296px;top:419px;width:779px;height:29px;border:3px solid #dd2a20;border-radius:5px"></div>
<div class="t" style="left:301.7px;top:721.4px;font-size:13px;color:#484848">14 items</div>
</body></html>
